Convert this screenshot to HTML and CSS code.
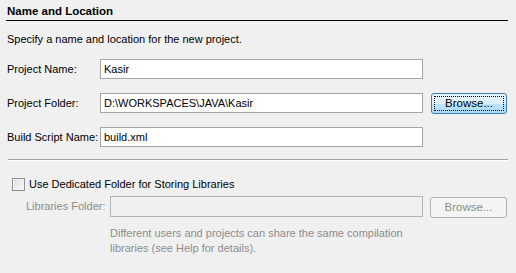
FILE: index.html
```html
<!DOCTYPE html>
<html lang="en">
<head>
    <meta charset="UTF-8">
    <title>New Project - Name and Location</title>
    <link rel="stylesheet" href="styles.css">
</head>
<body>
    <div class="panel">
        <div class="section-title">Name and Location</div>
        <p class="intro">Specify a name and location for the new project.</p>

        <div class="form">
            <label class="label">Project Name:</label>
            <div class="field">Kasir</div>
            <div></div>

            <label class="label">Project Folder:</label>
            <div class="field">D:\WORKSPACES\JAVA\Kasir</div>
            <button class="btn focused"><span>Browse...</span></button>

            <label class="label">Build Script Name:</label>
            <div class="field">build.xml</div>
            <div></div>
        </div>

        <div class="separator"></div>

        <div class="check-row">
            <span class="checkbox"></span>
            <span>Use Dedicated Folder for Storing Libraries</span>
        </div>

        <div class="libs">
            <label class="label disabled">Libraries Folder:</label>
            <div class="field off"></div>
            <button class="btn off"><span>Browse...</span></button>
            <p class="hint">Different users and projects can share the same compilation libraries (see Help for details).</p>
        </div>
    </div>
</body>
</html>
```

FILE: styles.css
```css
body {
    margin: 0;
    background: #f0f0f0;
    font-family: Tahoma, "Liberation Sans", Arial, sans-serif;
    font-size: 11px;
    color: #000;
}

.panel {
    width: 516px;
    height: 273px;
    padding-top: 5px;
    box-sizing: border-box;
}

.section-title {
    margin: 0 8px 0 6px;
    padding: 0 0 2px 1px;
    font-weight: bold;
    font-size: 11.5px;
    line-height: 13px;
    border-bottom: 1px solid #000;
}

.intro {
    margin: 12px 0 0 7px;
    line-height: 13px;
}

.form {
    display: grid;
    grid-template-columns: 85px 323px 76px;
    grid-auto-rows: 21px;
    column-gap: 8px;
    row-gap: 13px;
    align-items: start;
    margin: 13px 0 0 7px;
}

.label {
    line-height: 20px;
    white-space: nowrap;
}

.label.disabled {
    color: #8d8d8d;
}

.field {
    height: 20px;
    box-sizing: border-box;
    border: 1px solid #a5a5a5;
    background: #fff;
    padding: 0 3px;
    line-height: 18px;
    white-space: nowrap;
}

.field.off {
    background: #f0f0f0;
    border-color: #b4b4b4;
    height: 21px;
}

.btn {
    width: 76px;
    height: 21px;
    padding: 2px;
    box-sizing: border-box;
    border: 1px solid #3c7fb1;
    border-radius: 3px;
    background: linear-gradient(#eaf6fd 0%, #d9f0fc 50%, #bee6fd 51%, #a7d9f5 100%);
    font: inherit;
    font-size: 11.5px;
    color: #000;
}

.btn span {
    display: block;
    height: 100%;
    line-height: 13px;
    border: 1px dotted #000;
    box-sizing: border-box;
}

.btn.off {
    width: 77px;
    border-color: #adb2b5;
    background: #f4f4f4;
    color: #8d8d8d;
    margin-top: 1px;
}

.btn.off span {
    border-color: transparent;
}

.separator {
    margin: 11px 8px 0 8px;
    height: 1px;
    background: #a0a0a0;
    border-bottom: 1px solid #fff;
}

.check-row {
    display: flex;
    align-items: center;
    gap: 4px;
    margin: 17px 0 0 12px;
    line-height: 13px;
}

.checkbox {
    width: 13px;
    height: 13px;
    box-sizing: border-box;
    border: 1px solid #8e8f8f;
    background: linear-gradient(135deg, #dcdcdc, #fafafa);
    box-shadow: inset 0 0 0 1px #f4f4f4;
}

.libs {
    display: grid;
    grid-template-columns: 77px 313px 77px;
    column-gap: 7px;
    margin: 5px 0 0 26px;
    align-items: start;
}

.hint {
    grid-column: 2 / 4;
    margin: 8px 0 0 0;
    width: 300px;
    line-height: 15px;
    color: #8d8d8d;
}
```
